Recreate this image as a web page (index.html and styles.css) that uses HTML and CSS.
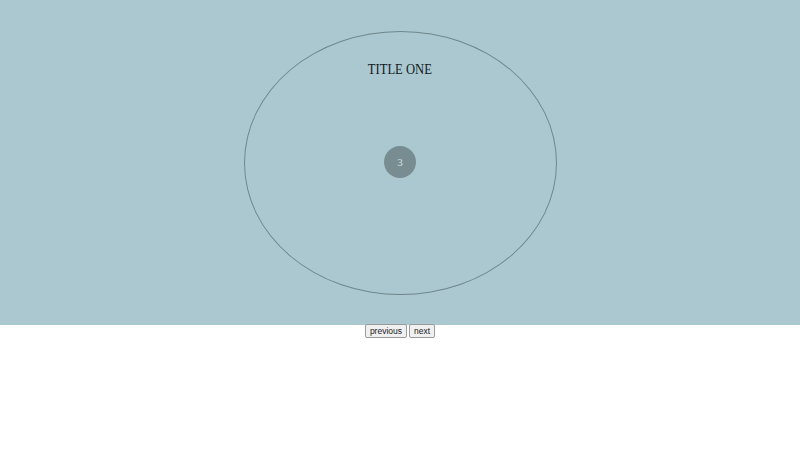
FILE: index.html
```html
<!DOCTYPE html>
<html>
<head>
<meta charset="utf-8">
<link rel="stylesheet" href="styles.css">
</head>
<body>
<div class="stage">
  <div class="ellipse">
    <div class="title">TITLE ONE</div>
    <div class="dot">3</div>
  </div>
</div>
<div class="controls">
  <button class="btn">previous</button>
  <button class="btn">next</button>
</div>
</body>
</html>
```
FILE: styles.css
```css
html, body {
  margin: 0;
  padding: 0;
  background: #ffffff;
}
.stage {
  height: 325px;
  background: #abc8d0;
  display: flex;
  justify-content: center;
  padding-top: 31px;
  box-sizing: border-box;
}
.ellipse {
  width: 313px;
  height: 264px;
  border: 1px solid #6f878c;
  border-radius: 50%;
  box-sizing: border-box;
  display: flex;
  flex-direction: column;
  align-items: center;
}
.title {
  font-family: "Liberation Serif", serif;
  font-size: 14.5px;
  transform: scaleX(0.87);
  color: #111a1e;
  margin-top: 29px;
  line-height: 16px;
}
.dot {
  width: 32px;
  height: 32px;
  border-radius: 50%;
  background: #778d92;
  color: #d4e0e3;
  font-family: "Liberation Serif", serif;
  font-size: 11px;
  display: flex;
  align-items: center;
  justify-content: center;
  margin-top: 69px;
}
.controls {
  display: flex;
  justify-content: center;
  gap: 2px;
  margin-top: -1px;
}
.btn {
  font-family: "Liberation Sans", Arial, sans-serif;
  font-size: 8.5px;
  height: 14px;
  padding: 0 4px;
  margin: 0;
  line-height: 12px;
  background: #f0f0f0;
  border: 1px solid #9a9a9a;
  border-radius: 2px;
  color: #222;
}
```
